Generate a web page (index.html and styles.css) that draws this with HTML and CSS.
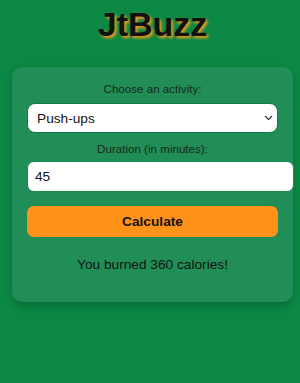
FILE: index.html
```html
<!DOCTYPE html>
<html lang="en">
<head>
<meta charset="utf-8">
<title>JtBuzz</title>
<link rel="stylesheet" href="styles.css">
</head>
<body>
<div class="page">
  <h1 class="title">JtBuzz</h1>
  <div class="card">
    <label class="label" for="activity">Choose an activity:</label>
    <div class="select-wrap">
      <select id="activity" class="select">
        <option>Push-ups</option>
        <option>Running</option>
        <option>Cycling</option>
      </select>
      <svg class="chevron" width="9" height="6" viewBox="0 0 9 6" aria-hidden="true">
        <path d="M1 1 L4.5 4.5 L8 1" fill="none" stroke="#333" stroke-width="1.2"/>
      </svg>
    </div>
    <label class="label label-duration" for="duration">Duration (in minutes):</label>
    <input id="duration" class="input" type="text" value="45">
    <button class="button" type="button">Calculate</button>
    <p class="result">You burned 360 calories!</p>
  </div>
</div>
</body>
</html>
```

FILE: styles.css
```css
html, body {
  margin: 0;
  padding: 0;
  background: #0b8944;
  height: 100%;
}
body {
  font-family: "Liberation Sans", Arial, sans-serif;
  color: #1e2a22;
}
.page {
  margin-left: 12px;
  width: 281px;
  padding-top: 4px;
}
.title {
  margin: 0;
  font-size: 34px;
  line-height: 41px;
  font-weight: bold;
  text-align: center;
  color: #111;
  text-shadow: 2px 2px 3px #ff9a1a;
}
.card {
  margin-top: 22px;
  background: #228e57;
  border-radius: 10px;
  padding: 15px 15px 15px;
  box-shadow: 0 4px 8px rgba(0, 0, 0, 0.22);
  text-align: center;
}
.label {
  display: block;
  font-size: 11.6px;
  line-height: 13px;
  margin-bottom: 8px;
  color: #16261c;
}
.label-duration {
  margin-bottom: 6px;
}
.select-wrap {
  position: relative;
  margin: 0 0 9px;
}
.select {
  display: block;
  box-sizing: border-box;
  width: 100%;
  height: 30px;
  margin: 0;
  padding: 0 20px 0 9px;
  border: 1px solid #0b7e3c;
  border-radius: 8px;
  background-color: #fff;
  color: #111;
  font-family: "Liberation Sans", Arial, sans-serif;
  font-size: 13.7px;
  -webkit-appearance: none;
  appearance: none;
  outline: none;
}
.chevron {
  position: absolute;
  right: 5px;
  top: 12px;
  pointer-events: none;
}
.input {
  display: block;
  width: 100%;
  height: 29px;
  margin: 0 0 14px;
  padding: 0 7px;
  border: 1px solid #1f8a52;
  border-radius: 7px;
  background: #fff;
  color: #111;
  font-family: "Liberation Sans", Arial, sans-serif;
  font-size: 13.7px;
  text-align: left;
  outline: none;
}
.button {
  display: block;
  width: 100%;
  height: 31px;
  margin: 0;
  padding: 0;
  border: none;
  border-radius: 7px;
  background: #ff931a;
  color: #111;
  font-family: "Liberation Sans", Arial, sans-serif;
  font-size: 13.7px;
  font-weight: bold;
}
.result {
  margin: 20px 0 14px;
  font-size: 13.7px;
  line-height: 16px;
  color: #111;
}
```
